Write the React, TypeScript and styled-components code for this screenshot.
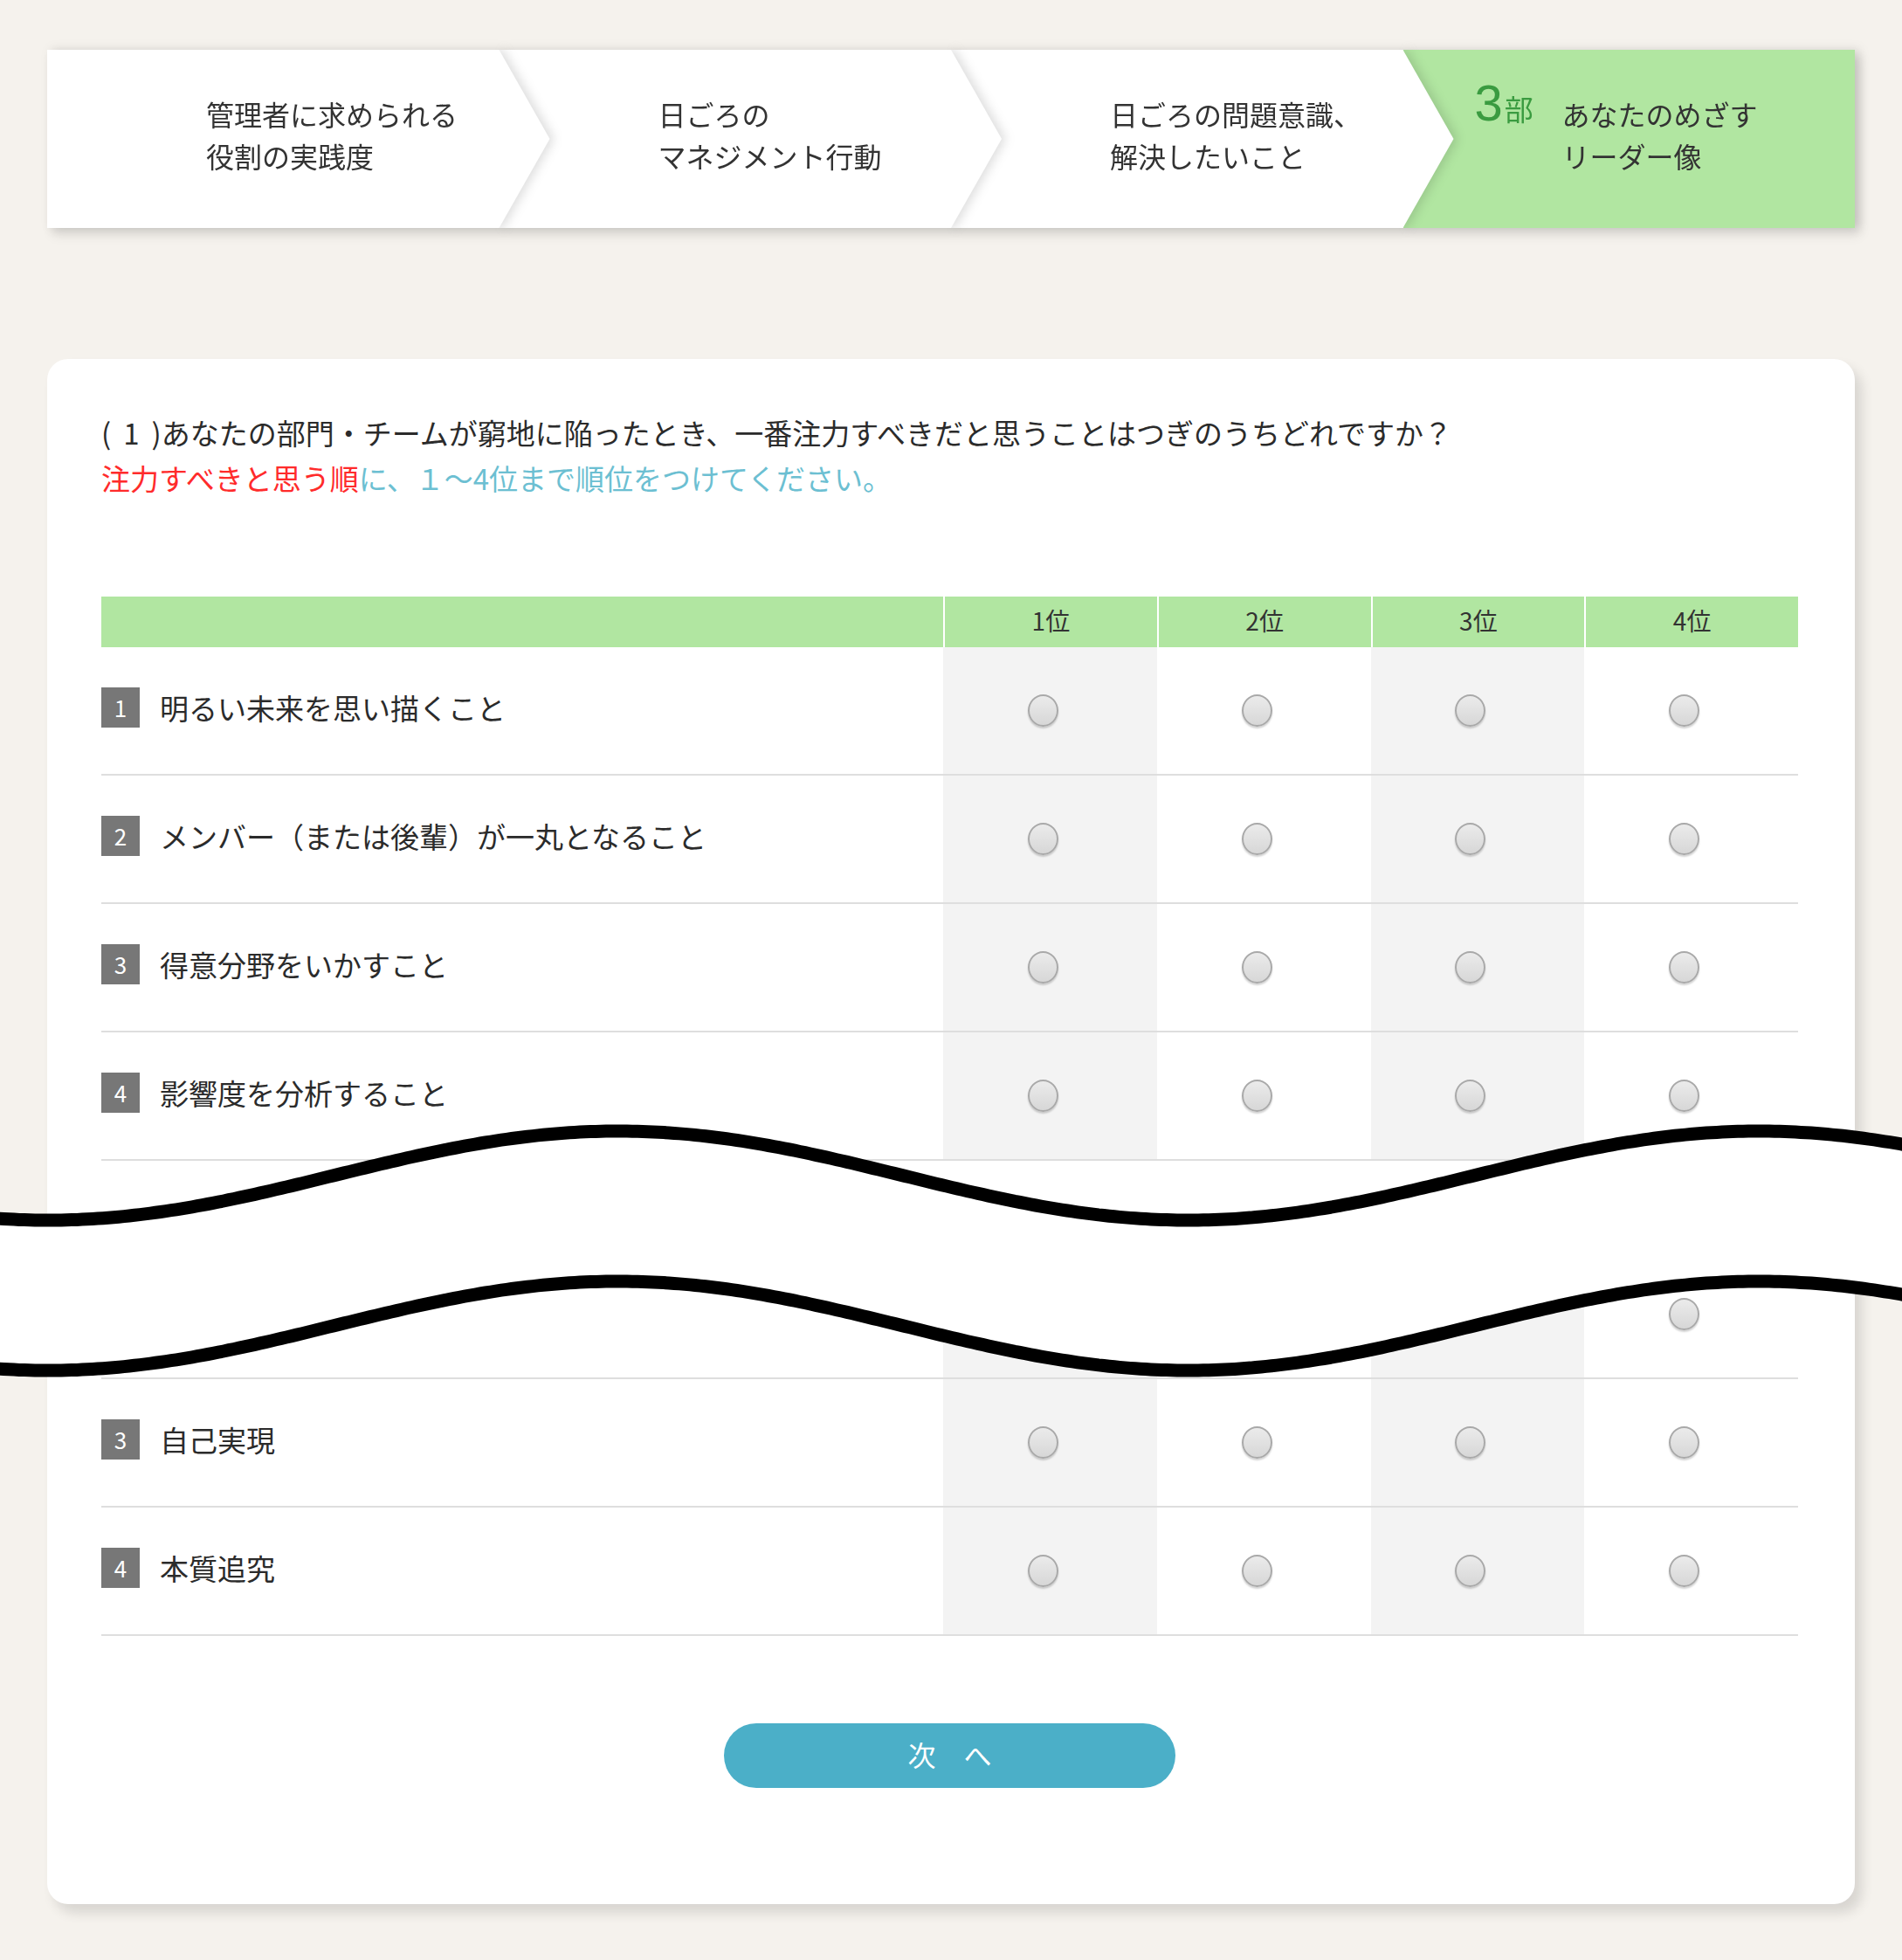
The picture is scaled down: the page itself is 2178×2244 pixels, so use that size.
import React, { useMemo } from "react";
import styled, { createGlobalStyle } from "styled-components";

const GlobalStyle = createGlobalStyle`
  html, body { margin: 0; padding: 0; background: #f5f2ed; }
  body {
    font-family: "Noto Sans CJK JP", "Noto Sans", sans-serif;
    color: #2e2e2e;
  }
  * { box-sizing: border-box; }
`;

const Page = styled.div`
  position: relative;
  width: 2178px;
  padding: 57px 54px 64px;
  overflow: hidden;
`;

const Stepper = styled.ol`
  display: grid;
  grid-template-columns: repeat(4, 1fr);
  height: 204px;
  margin: 0;
  padding: 0;
  list-style: none;
  box-shadow: 6px 8px 12px rgba(0, 0, 0, 0.1);
`;

const Step = styled.li<{ $order: number; $active?: boolean; $last?: boolean }>`
  position: relative;
  min-width: 0;
  z-index: ${(p) => 10 - p.$order};
  display: flex;
  align-items: center;
  padding-left: ${(p) => (p.$active ? 82 : 182)}px;
  padding-bottom: 10px;
  filter: drop-shadow(5px 0 6px rgba(0, 0, 0, 0.13));

  &::before {
    content: "";
    position: absolute;
    top: 0;
    bottom: 0;
    left: 0;
    right: ${(p) => (p.$last ? 0 : -58)}px;
    background: ${(p) => (p.$active ? "#b1e6a1" : "#ffffff")};
    clip-path: ${(p) =>
      p.$last
        ? "none"
        : "polygon(0 0, calc(100% - 58px) 0, 100% 50%, calc(100% - 58px) 100%, 0 100%)"};
    z-index: -1;
  }
`;

const StepText = styled.div`
  font-size: 32px;
  line-height: 48px;
  color: #333;
  white-space: nowrap;
`;

const PartNo = styled.div`
  align-self: flex-start;
  margin-top: 32px;
  width: 100px;
  display: flex;
  align-items: baseline;
  color: #3a9b40;
  line-height: 1;
`;

const PartDigit = styled.span`
  font-family: "Liberation Sans", Arial, sans-serif;
  font-size: 58px;
`;

const PartUnit = styled.span`
  font-size: 33px;
  margin-left: 2px;
`;

const Card = styled.section`
  margin-top: 150px;
  background: #fff;
  border-radius: 24px;
  padding: 58px 65px 133px 62px;
  box-shadow: 8px 10px 14px rgba(0, 0, 0, 0.12);
`;

const Question = styled.p`
  margin: 0;
  font-size: 33px;
  line-height: 52px;
  color: #2b2b2b;
  white-space: nowrap;
`;

const QNum = styled.span`
  margin: 0 14px;
`;

const Instruction = styled.p`
  margin: 0;
  font-size: 33px;
  line-height: 52px;
  color: #6cbfd2;
  white-space: nowrap;
`;

const Emph = styled.span`
  color: #ff2b2b;
`;

const Table = styled.div`
  margin-top: 110px;
`;

const cols = "964px repeat(4, 1fr)";

const HeaderRow = styled.div`
  display: grid;
  grid-template-columns: ${cols};
  height: 58px;
  background: #b1e6a1;
`;

const HeaderCell = styled.div`
  border-left: 2px solid #fff;
  display: flex;
  align-items: center;
  justify-content: center;
  font-size: 28px;
  color: #333;
  padding-bottom: 4px;
`;

const Row = styled.div`
  display: grid;
  grid-template-columns: ${cols};
  height: 147px;
  border-bottom: 2px solid #dedede;
`;

const Filler = styled.div`
  height: 103px;
`;

const LabelCell = styled.div`
  display: flex;
  align-items: center;
  gap: 23px;
  font-size: 33px;
  color: #2b2b2b;
  white-space: nowrap;
  padding-bottom: 8px;
`;

const NumBadge = styled.span`
  width: 44px;
  height: 46px;
  background: #777;
  color: #fff;
  font-size: 26px;
  display: flex;
  align-items: center;
  justify-content: center;
  flex: none;
`;

const RankCell = styled.div<{ $shaded: boolean }>`
  display: flex;
  align-items: center;
  justify-content: center;
  background: ${(p) => (p.$shaded ? "#f3f3f3" : "transparent")};
`;

const Radio = styled.input`
  appearance: none;
  margin: 0 16px 0 0;
  width: 35px;
  height: 37px;
  border-radius: 50%;
  border: 2px solid #a9a9a9;
  background: linear-gradient(#ebebeb, #d7d7d7);
  box-shadow: 0 2px 2px rgba(0, 0, 0, 0.18);
`;

const NextButton = styled.button`
  display: block;
  margin: 100px auto 0;
  width: 517px;
  height: 74px;
  border: none;
  border-radius: 37px;
  background: #4bafc8;
  color: #fff;
  font-family: inherit;
  font-size: 32px;
  line-height: 1;
  padding: 0 0 4px;
`;

const WaveLayer = styled.svg`
  position: absolute;
  left: 0;
  top: 1260px;
  width: 2178px;
  height: 340px;
  pointer-events: none;
`;

const steps = [
  ["管理者に求められる", "役割の実践度"],
  ["日ごろの", "マネジメント行動"],
  ["日ごろの問題意識、", "解決したいこと"],
];

type Item = { no: string; label: string };

const q1: Item[] = [
  { no: "1", label: "明るい未来を思い描くこと" },
  { no: "2", label: "メンバー（または後輩）が一丸となること" },
  { no: "3", label: "得意分野をいかすこと" },
  { no: "4", label: "影響度を分析すること" },
];

const q2: Item[] = [
  { no: "2", label: "" },
  { no: "3", label: "自己実現" },
  { no: "4", label: "本質追究" },
];

const ranks = ["1位", "2位", "3位", "4位"];

function ItemRow({ item, name }: { item: Item; name: string }) {
  return (
    <Row>
      <LabelCell>
        <NumBadge>{item.no}</NumBadge>
        {item.label}
      </LabelCell>
      {ranks.map((r, i) => (
        <RankCell key={r} $shaded={i % 2 === 0}>
          <Radio type="radio" name={name} aria-label={r} />
        </RankCell>
      ))}
    </Row>
  );
}

function Waves() {
  const { top, bottom, fill } = useMemo(() => {
    const t: [number, number][] = [];
    for (let x = -20; x <= 2200; x += 6) {
      const y = 1346 + 51 * Math.cos((2 * Math.PI * (x - 55)) / 1306) - 1260;
      t.push([x, y]);
    }
    const b = t.map(([x, y]) => [x, y + 172] as [number, number]);
    const toStr = (pts: [number, number][]) =>
      pts.map(([x, y]) => `${x.toFixed(1)},${y.toFixed(1)}`).join(" ");
    return {
      top: toStr(t),
      bottom: toStr(b),
      fill: toStr([...t, ...b.slice().reverse()]),
    };
  }, []);
  return (
    <WaveLayer viewBox="0 0 2178 340" preserveAspectRatio="none">
      <polygon points={fill} fill="#fff" />
      <polyline points={top} fill="none" stroke="#000" strokeWidth={15} strokeLinejoin="round" />
      <polyline points={bottom} fill="none" stroke="#000" strokeWidth={15} strokeLinejoin="round" />
    </WaveLayer>
  );
}

export default function App() {
  return (
    <>
      <GlobalStyle />
      <Page>
        <Stepper>
          {steps.map((lines, i) => (
            <Step key={i} $order={i}>
              <StepText>
                {lines[0]}
                <br />
                {lines[1]}
              </StepText>
            </Step>
          ))}
          <Step $order={3} $active $last>
            <PartNo>
              <PartDigit>3</PartDigit>
              <PartUnit>部</PartUnit>
            </PartNo>
            <StepText>
              あなたのめざす
              <br />
              リーダー像
            </StepText>
          </Step>
        </Stepper>

        <Card>
          <Question>
            (<QNum>1</QNum>)あなたの部門・チームが窮地に陥ったとき、一番注力すべきだと思うことはつぎのうちどれですか？
          </Question>
          <Instruction>
            <Emph>注力すべきと思う順</Emph>に、１～4位まで順位をつけてください。
          </Instruction>

          <Table>
            <HeaderRow>
              <div />
              {ranks.map((r) => (
                <HeaderCell key={r}>{r}</HeaderCell>
              ))}
            </HeaderRow>
            {q1.map((it) => (
              <ItemRow key={"a" + it.no} item={it} name={"q1-" + it.no} />
            ))}
            <Filler />
            {q2.map((it) => (
              <ItemRow key={"b" + it.no} item={it} name={"q2-" + it.no} />
            ))}
          </Table>

          <NextButton type="button">次　へ</NextButton>
        </Card>
        <Waves />
      </Page>
    </>
  );
}
